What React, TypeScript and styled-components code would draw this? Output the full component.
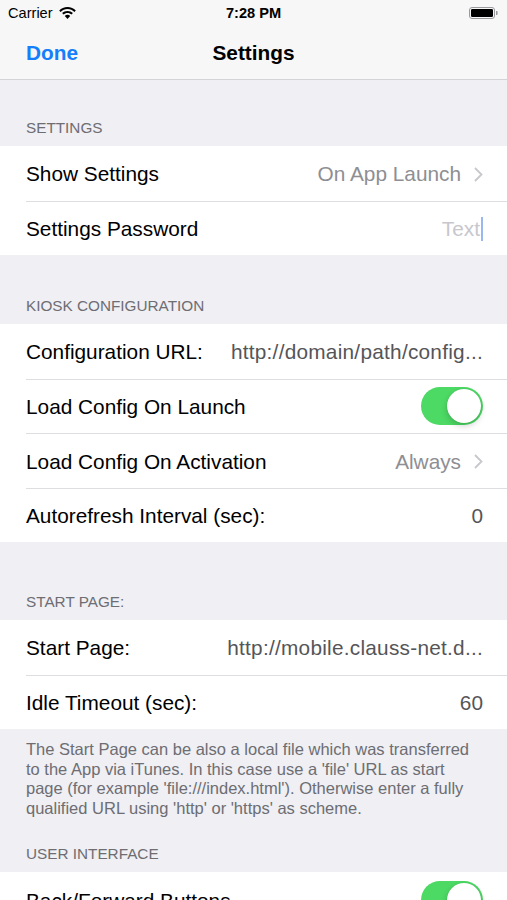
import React from 'react';
import styled, { createGlobalStyle } from 'styled-components';

const GlobalStyle = createGlobalStyle`
  html, body {
    margin: 0;
    padding: 0;
    background: #efeff4;
  }
  body {
    font-family: "Liberation Sans", Arial, sans-serif;
    -webkit-font-smoothing: antialiased;
  }
`;

const Screen = styled.div`
  width: 507px;
  height: 900px;
  overflow: hidden;
  background: #efeff4;
`;

const TopBars = styled.div`
  background: #f7f7f8;
  border-bottom: 1px solid #d4d4d8;
`;

const StatusBar = styled.div`
  height: 24px;
  padding: 1px 8px 0;
  display: grid;
  grid-template-columns: 1fr auto 1fr;
  align-items: center;
  font-size: 14.6px;
  color: #000;
`;

const Carrier = styled.div`
  display: flex;
  align-items: center;
  gap: 6px;
`;

const Clock = styled.div`
  font-weight: bold;
`;

const BatteryWrap = styled.div`
  display: flex;
  justify-content: flex-end;
  padding-right: 1px;
`;

const NavBar = styled.div`
  height: 54px;
  padding: 1px 26px 0;
  box-sizing: border-box;
  display: grid;
  grid-template-columns: 1fr auto 1fr;
  align-items: center;
  font-size: 20.8px;
  font-weight: bold;
`;

const DoneButton = styled.span`
  color: #157efb;
`;

const Title = styled.span`
  color: #000;
`;

const SectionHeader = styled.div<{ $top: number }>`
  padding: ${(p) => p.$top}px 26px 9px;
  font-size: 15.3px;
  line-height: 18px;
  color: #6d6d72;
  text-transform: uppercase;
`;

const Group = styled.div`
  background: #fff;
`;

const Row = styled.div`
  height: 54.5px;
  box-sizing: border-box;
  margin-left: 26px;
  padding: 2px 24px 0 0;
  display: flex;
  align-items: center;
  font-size: 20.8px;
  color: #000;

  & + & {
    border-top: 1px solid #dedee2;
  }
`;

const Label = styled.span`
  flex: none;
  white-space: nowrap;
`;

const Detail = styled.span`
  margin-left: auto;
  display: flex;
  align-items: center;
  gap: 13px;
  color: #8e8e93;
`;

const Field = styled.span<{ $width?: number }>`
  margin-left: auto;
  width: ${(p) => (p.$width ? `${p.$width}px` : 'auto')};
  letter-spacing: ${(p) => (p.$width ? '0.25px' : '0')};
  text-align: right;
  white-space: nowrap;
  overflow: hidden;
  text-overflow: ellipsis;
  color: #555558;
`;

const Placeholder = styled.span`
  margin-left: auto;
  display: flex;
  align-items: center;
  color: #c7c7cd;
`;

const Caret = styled.span`
  width: 2px;
  height: 24px;
  margin-left: 1px;
  background: #9ab8f0;
`;

const Switch = styled.span<{ $on: boolean }>`
  margin-left: auto;
  margin-top: -2px;
  width: 62px;
  height: 38px;
  box-sizing: border-box;
  border-radius: 19px;
  padding: 2px;
  display: flex;
  justify-content: ${(p) => (p.$on ? 'flex-end' : 'flex-start')};
  background: ${(p) => (p.$on ? '#4cd964' : '#e5e5ea')};
`;

const Knob = styled.span`
  width: 34px;
  height: 34px;
  border-radius: 50%;
  background: #fff;
  box-shadow: 0 3px 6px rgba(0, 0, 0, 0.18), 0 0 1px rgba(0, 0, 0, 0.2);
`;

const Footer = styled.div`
  padding: 11px 24px 0 26px;
  font-size: 16.5px;
  line-height: 19.6px;
  color: #6d6d72;
  white-space: nowrap;
`;

const Wifi = () => (
  <svg width="17" height="12" viewBox="0 0 17 12">
    <path d="M8.5 0C5.2 0 2.3 1.3 0.2 3.4L1.6 4.9C3.4 3.1 5.8 2 8.5 2s5.1 1.1 6.9 2.9l1.4-1.5C14.7 1.3 11.8 0 8.5 0z" fill="#000" />
    <path d="M8.5 3.9c-2.1 0-4 0.8-5.4 2.2l1.4 1.5c1-1 2.4-1.7 4-1.7s3 0.7 4 1.7l1.4-1.5C12.5 4.7 10.6 3.9 8.5 3.9z" fill="#000" />
    <path d="M8.5 7.8c-1.1 0-2 0.4-2.7 1.1L8.5 12l2.7-3.1C10.5 8.2 9.6 7.8 8.5 7.8z" fill="#000" />
  </svg>
);

const Battery = () => (
  <svg width="29" height="12" viewBox="0 0 29 12">
    <rect x="0.5" y="0.5" width="25" height="11" rx="2.5" fill="none" stroke="#9a9a9e" />
    <rect x="2" y="2" width="22" height="8" rx="1.2" fill="#000" />
    <path d="M27 4h0.6a1 1 0 0 1 1 1v2a1 1 0 0 1-1 1H27z" fill="#9a9a9e" />
  </svg>
);

const Chevron = () => (
  <svg width="9" height="15" viewBox="0 0 9 15">
    <path d="M1 1l6.5 6.5L1 14" fill="none" stroke="#c7c7cc" strokeWidth="1.8" />
  </svg>
);

export default function App() {
  return (
    <Screen>
      <GlobalStyle />
      <TopBars>
        <StatusBar>
          <Carrier>
            Carrier <Wifi />
          </Carrier>
          <Clock>7:28 PM</Clock>
          <BatteryWrap>
            <Battery />
          </BatteryWrap>
        </StatusBar>
        <NavBar>
          <DoneButton>Done</DoneButton>
          <Title>Settings</Title>
          <span />
        </NavBar>
      </TopBars>

      <SectionHeader $top={39}>Settings</SectionHeader>
      <Group>
        <Row>
          <Label>Show Settings</Label>
          <Detail>
            On App Launch <Chevron />
          </Detail>
        </Row>
        <Row>
          <Label>Settings Password</Label>
          <Placeholder>
            Text
            <Caret />
          </Placeholder>
        </Row>
      </Group>

      <SectionHeader $top={42}>Kiosk Configuration</SectionHeader>
      <Group>
        <Row>
          <Label>Configuration URL:</Label>
          <Field $width={258}>http://domain/path/config...</Field>
        </Row>
        <Row>
          <Label>Load Config On Launch</Label>
          <Switch $on>
            <Knob />
          </Switch>
        </Row>
        <Row>
          <Label>Load Config On Activation</Label>
          <Detail>
            Always <Chevron />
          </Detail>
        </Row>
        <Row>
          <Label>Autorefresh Interval (sec):</Label>
          <Field>0</Field>
        </Row>
      </Group>

      <SectionHeader $top={51}>Start Page:</SectionHeader>
      <Group>
        <Row>
          <Label>Start Page:</Label>
          <Field $width={258}>http://mobile.clauss-net.d...</Field>
        </Row>
        <Row>
          <Label>Idle Timeout (sec):</Label>
          <Field>60</Field>
        </Row>
      </Group>
      <Footer>
        The Start Page can be also a local file which was transferred
        <br />
        to the App via iTunes. In this case use a 'file' URL as start
        <br />
        page (for example 'file:///index.html'). Otherwise enter a fully
        <br />
        qualified URL using 'http' or 'https' as scheme.
      </Footer>

      <SectionHeader $top={27}>User Interface</SectionHeader>
      <Group>
        <Row>
          <Label>Back/Forward Buttons</Label>
          <Switch $on>
            <Knob />
          </Switch>
        </Row>
      </Group>
    </Screen>
  );
}
